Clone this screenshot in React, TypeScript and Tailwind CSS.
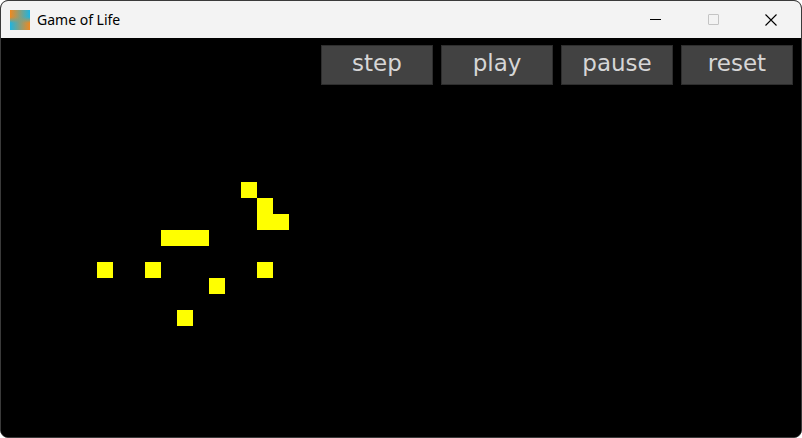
import React from "react";

const CELL = 16;
const cells: [number, number][] = [
  [9, 0],
  [10, 1],
  [10, 2],
  [11, 2],
  [4, 3],
  [5, 3],
  [6, 3],
  [0, 5],
  [3, 5],
  [10, 5],
  [7, 6],
  [5, 8],
];

function AppIcon() {
  return (
    <svg width="20" height="20" viewBox="0 0 20 20">
      <defs>
        <linearGradient id="g1" x1="0" y1="0" x2="1" y2="0">
          <stop offset="0" stopColor="#f0891e" />
          <stop offset="1" stopColor="#1eb4e0" />
        </linearGradient>
        <linearGradient id="g2" x1="0" y1="0" x2="1" y2="0">
          <stop offset="0" stopColor="#1eb4e0" />
          <stop offset="1" stopColor="#f0891e" />
        </linearGradient>
        <linearGradient id="v" x1="0" y1="0" x2="0" y2="1">
          <stop offset="0" stopColor="white" />
          <stop offset="0.35" stopColor="white" />
          <stop offset="0.65" stopColor="black" />
          <stop offset="1" stopColor="black" />
        </linearGradient>
        <mask id="m">
          <rect width="20" height="20" fill="url(#v)" />
        </mask>
      </defs>
      <rect width="20" height="20" fill="url(#g2)" />
      <rect width="20" height="20" fill="url(#g1)" mask="url(#m)" />
    </svg>
  );
}

export default function App() {
  const buttons = ["step", "play", "pause", "reset"];
  return (
    <div className="w-[802px] h-[438px] bg-white">
      <div className="w-full h-full rounded-lg border border-[#3a3a3a] overflow-hidden flex flex-col bg-black">
        <div className="h-[37px] bg-[#f3f3f3] flex items-center shrink-0">
          <div className="ml-[9px] mt-[1px]">
            <AppIcon />
          </div>
          <span
            className="ml-[7px] text-[14px] text-black"
            style={{ fontFamily: '"Segoe UI", "Noto Sans", sans-serif' }}
          >
            Game of Life
          </span>
          <div className="ml-auto flex items-center h-full">
            <div className="w-[58px] h-full flex items-center justify-center">
              <div className="w-[11px] h-px bg-black" />
            </div>
            <div className="w-[58px] h-full flex items-center justify-center">
              <div className="w-[11px] h-[11px] border border-[#c4c4c4] rounded-[1px]" />
            </div>
            <div className="w-[58px] h-full flex items-center justify-center mr-[1px]">
              <svg width="12" height="12" viewBox="0 0 12 12">
                <path d="M0.5 0.5 L11.5 11.5 M11.5 0.5 L0.5 11.5" stroke="black" strokeWidth="1.1" />
              </svg>
            </div>
          </div>
        </div>
        <div className="relative flex-1 bg-black">
          <div className="flex justify-end gap-[8px] pt-[7px] pr-[8px]">
            {buttons.map((b) => (
              <div
                key={b}
                className="w-[112px] h-[40px] bg-[#424242] border border-[#2e2e2e] flex items-center justify-center text-[#d6d6d6] text-[23px] leading-none pb-[4px]"
                style={{ fontFamily: '"DejaVu Sans", sans-serif' }}
              >
                {b}
              </div>
            ))}
          </div>
          {cells.map(([c, r], i) => (
            <div
              key={i}
              className="absolute bg-[#ffff00]"
              style={{
                left: 96 + c * CELL,
                top: 144 + r * CELL,
                width: CELL,
                height: CELL,
              }}
            />
          ))}
        </div>
      </div>
    </div>
  );
}
